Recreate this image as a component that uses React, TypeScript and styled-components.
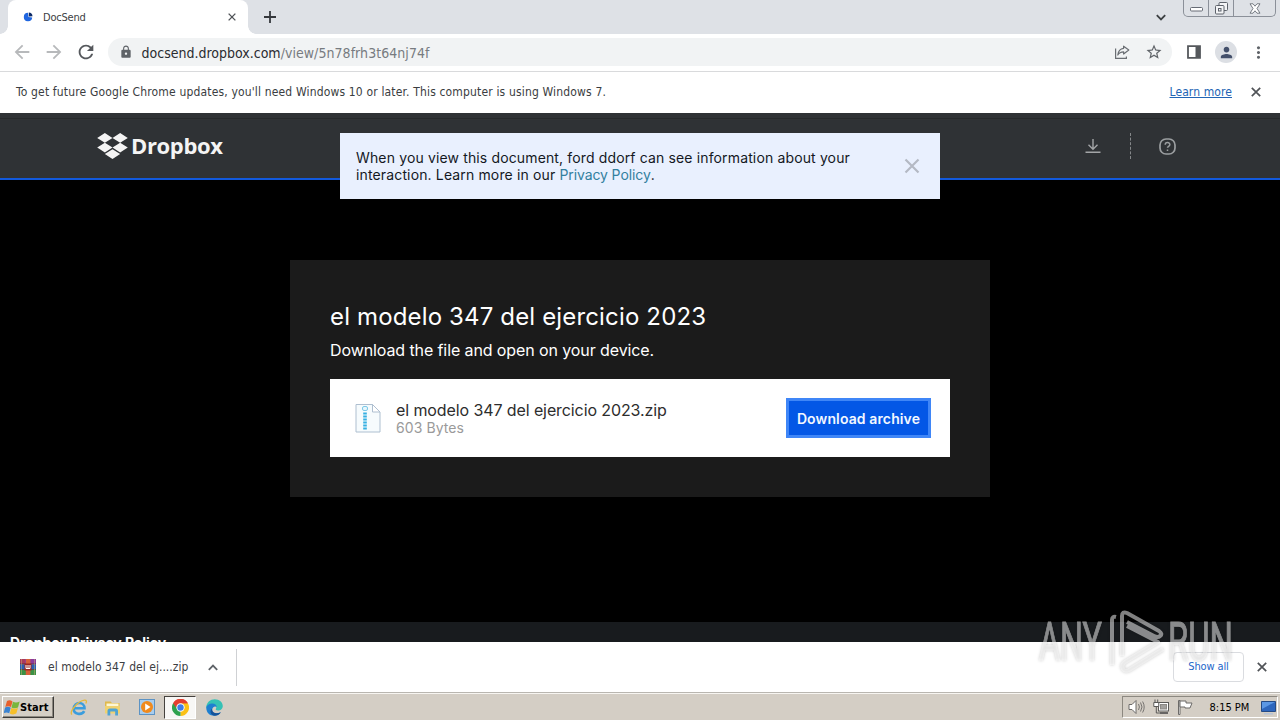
import React from "react";
import styled, { createGlobalStyle } from "styled-components";
import {
  MdArrowBack,
  MdArrowForward,
  MdLock,
  MdMoreVert,
  MdPerson,
  MdRefresh,
  MdStarBorder,
} from "react-icons/md";

const UI_FONT = `"DejaVu Sans Condensed", "DejaVu Sans", sans-serif`;
const PAGE_FONT = `Inter, "Liberation Sans", sans-serif`;

const GlobalStyle = createGlobalStyle`
  * { box-sizing: border-box; }
  body { margin: 0; background: #000; overflow: hidden; }
  svg { display: block; flex: none; }
`;

const Desktop = styled.div`
  position: relative;
  display: flex;
  flex-direction: column;
  width: 1280px;
  height: 720px;
  overflow: hidden;
  font-family: ${UI_FONT};
  white-space: nowrap;
`;

/* Browser chrome */

const TabStrip = styled.div`
  display: flex;
  height: 34px;
  padding-left: 8px;
  background: #dee1e6;
`;

const Tab = styled.div`
  position: relative;
  display: flex;
  align-items: center;
  width: 240px;
  padding: 0 9px 0 15px;
  border-radius: 8px 8px 0 0;
  background: #fff;
  color: #3c4043;

  &::before,
  &::after {
    content: "";
    position: absolute;
    bottom: 0;
    width: 8px;
    height: 8px;
  }
  &::before {
    left: -8px;
    background: radial-gradient(circle at 0 0, transparent 7.5px, #fff 8px);
  }
  &::after {
    right: -8px;
    background: radial-gradient(circle at 100% 0, transparent 7.5px, #fff 8px);
  }
`;

const TabTitle = styled.span`
  flex: 1;
  margin-left: 10px;
  font-size: 11px;
  letter-spacing: -0.2px;
`;

const NewTab = styled.div`
  display: flex;
  align-items: center;
  margin-left: 16px;
`;

const StripSpacer = styled.div`
  flex: 1;
`;

const TabSearch = styled.div`
  display: flex;
  align-items: center;
  margin-right: 17px;
`;

const WindowButtons = styled.div`
  display: flex;
  width: 93px;
  height: 17px;
  margin-right: 4px;
  border: 1px solid #8b9099;
  border-top: 0;
  border-radius: 0 0 5px 5px;
`;

const WindowButton = styled.div<{ $width: number }>`
  display: flex;
  align-items: center;
  justify-content: center;
  width: ${(p) => p.$width}px;

  & + & {
    border-left: 1px solid #8b9099;
  }
`;

const Toolbar = styled.div`
  display: flex;
  align-items: center;
  height: 38px;
  padding: 0 10px 1px 11px;
  border-bottom: 1px solid #d9dadc;
  background: #fff;
  color: #5f6368;
`;

const NavButton = styled.div<{ $disabled?: boolean }>`
  width: 32px;
  color: ${(p) => (p.$disabled ? "#b7b9bb" : "#55585c")};
`;

const Omnibox = styled.div`
  display: flex;
  align-items: center;
  width: 1064px;
  height: 28px;
  margin-left: 1px;
  padding: 0 9px 0 11px;
  border-radius: 14px;
  background: #f1f3f4;
`;

const Address = styled.div`
  flex: 1;
  margin-left: 8.5px;
  padding-top: 1px;
  color: #777b80;
  font-size: 14px;
  letter-spacing: 0.05px;
`;

const Host = styled.span`
  color: #2a2c30;
  letter-spacing: 0;
`;

const OmniboxActions = styled.div`
  display: flex;
  align-items: center;
  gap: 15px;
`;

const ToolbarActions = styled.div`
  display: flex;
  align-items: center;
  flex: 1;
  padding-left: 15px;
`;

const Avatar = styled.div`
  display: flex;
  align-items: center;
  justify-content: center;
  width: 22px;
  height: 22px;
  margin: 0 12px 0 14px;
  border-radius: 50%;
  background: #dcdfe4;
  color: #44506b;
`;

const InfoBar = styled.div`
  display: flex;
  align-items: center;
  height: 41px;
  padding: 0 19px 1px 16px;
  background: #fff;
  color: #3a3d41;
  font-size: 12px;
`;

const InfoText = styled.span`
  flex: 1;
  padding-bottom: 1px;
  letter-spacing: 0.16px;
`;

const InfoLink = styled.a`
  margin-right: 19px;
  padding-bottom: 1px;
  color: #2264b4;
  letter-spacing: 0.1px;
  text-decoration: underline;
  text-underline-offset: 1px;
`;

/* Web page */

const Viewport = styled.main`
  position: relative;
  display: flex;
  flex-direction: column;
  height: 529px;
  overflow: hidden;
  background: #000;
  font-family: ${PAGE_FONT};
`;

const SiteHeader = styled.header`
  display: flex;
  align-items: center;
  height: 67px;
  padding: 1px 104px 0 97px;
  border-bottom: 2px solid #1259dc;
  background: linear-gradient(#2f3235 5px, #26292b 5px, #26292b 6px, #2f3235 6px);
`;

const Brand = styled.div`
  display: flex;
  align-items: center;
  flex: 1;
  color: #f4f4f4;
`;

const Wordmark = styled.span`
  margin: -3px 0 0 3px;
  font: 700 22px/26px "Open Sans", sans-serif;
  letter-spacing: -0.35px;
`;

const HeaderTools = styled.div`
  display: flex;
  align-items: center;
`;

const DashedRule = styled.div`
  height: 26px;
  margin: 0 28px 0 29px;
  border-left: 1px dashed #85888a;
`;

const Notice = styled.div`
  position: absolute;
  top: 20px;
  left: 340px;
  display: flex;
  align-items: center;
  justify-content: space-between;
  width: 600px;
  height: 66px;
  padding: 0 20px 0 16px;
  background: #e9f0fe;
  color: #14181f;
  font-size: 14px;
  line-height: 17px;
`;

const NoticeLine = styled.div`
  letter-spacing: 0.14px;
`;

const NoticeLink = styled.a`
  color: #33809f;
  letter-spacing: -0.1px;
`;

const Stage = styled.section`
  flex: 1;
  padding-top: 80px;
`;

const Card = styled.article`
  width: 700px;
  height: 237px;
  margin: 0 auto;
  padding: 41px 40px 40px;
  background: #1b1b1b;
  color: #fff;
`;

const Title = styled.h1`
  margin: 0;
  font-size: 24px;
  font-weight: 400;
  line-height: 32px;
  letter-spacing: 0.15px;
`;

const Subtitle = styled.p`
  margin: 7px 0 19px;
  font-size: 16px;
  line-height: 20px;
  letter-spacing: -0.1px;
`;

const FileRow = styled.div`
  display: flex;
  align-items: center;
  height: 78px;
  padding: 0 19px 0 25px;
  background: #fff;
`;

const FileInfo = styled.div`
  flex: 1;
  margin-left: 15px;
  padding-top: 2px;
`;

const FileName = styled.div`
  color: #2d2d2d;
  font-size: 16px;
  line-height: 18px;
  letter-spacing: -0.1px;
`;

const FileSize = styled.div`
  color: #9a9a9a;
  font-size: 14px;
  line-height: 18px;
  letter-spacing: 0.08px;
`;

const DownloadButton = styled.button`
  width: 145px;
  height: 40px;
  padding: 0;
  border: 3px solid #3f86f7;
  background: #0357e6;
  color: #f2f7ff;
  font: 600 14px/17px ${PAGE_FONT};
  letter-spacing: 0.12px;
`;

const SiteFooter = styled.footer`
  height: 20px;
  padding: 11px 10px 0;
  background: #181b1e;
  color: #fff;
  font-size: 14px;
  font-weight: 700;
  line-height: 20px;
  letter-spacing: -0.08px;
`;

/* Download shelf */

const Shelf = styled.div`
  display: flex;
  align-items: center;
  height: 50px;
  padding: 0 13px 0 20px;
  background: #fff;
  color: #3c4043;
`;

const ShelfItem = styled.div`
  display: flex;
  align-items: center;
  width: 217px;
  height: 37px;
  border-right: 1px solid #cfd1d4;
`;

const ShelfName = styled.span`
  margin: 0 20px 0 12px;
  font-size: 12px;
  letter-spacing: 0.03px;
`;

const ShowAll = styled.div`
  display: flex;
  align-items: center;
  justify-content: center;
  width: 71px;
  height: 30px;
  margin: 0 13px 0 auto;
  padding-bottom: 2px;
  border: 1px solid #dadce0;
  border-radius: 4px;
  color: #1e66c9;
  font-size: 11px;
  letter-spacing: -0.12px;
`;

/* Taskbar */

const Taskbar = styled.div`
  display: flex;
  align-items: center;
  height: 28px;
  padding: 1px 2px 0 2px;
  border-top: 1px solid #b9b6b0;
  background: #d4cec5;
  box-shadow: inset 0 1px #f7f5f1;
`;

const StartButton = styled.div`
  display: flex;
  align-items: center;
  width: 52px;
  height: 22px;
  padding-left: 1px;
  border: 1px solid;
  border-color: #fff #3d3b38 #3d3b38 #fff;
  box-shadow: inset -1px -1px #8c8880;
  color: #000;
  font-size: 11px;
  font-weight: 700;
  letter-spacing: 0.1px;
`;

const QuickLaunch = styled.div`
  display: flex;
  align-items: center;
  margin-left: 9px;
`;

const Launcher = styled.div<{ $active?: boolean }>`
  display: flex;
  align-items: center;
  justify-content: center;
  width: 32px;
  height: 23px;
  margin-right: 1.8px;
  border: 1px solid;
  border-color: ${(p) => (p.$active ? "#45423e #fff #fff #45423e" : "transparent")};
  background: ${(p) => (p.$active ? "#f8f7f5" : "transparent")};
`;

const Tray = styled.div`
  display: flex;
  align-items: center;
  width: 156px;
  height: 22px;
  margin-left: auto;
  padding-left: 5px;
  border: 1px solid;
  border-color: #8c8880 #fff #fff #8c8880;
`;

const TrayIcon = styled.div`
  width: 24.5px;
`;

const Clock = styled.span`
  width: 50px;
  margin-left: 8px;
  font-size: 11px;
  color: #000;
`;

const Watermark = styled.svg`
  position: absolute;
  top: 605px;
  left: 1030px;
  filter: drop-shadow(0 0 1.5px rgba(0, 0, 0, 0.4));
  pointer-events: none;
`;

const CloseIcon = ({ size }: { size: number }) => (
  <svg width={size} height={size} viewBox="0 0 10 10" fill="none" stroke="#505357" strokeWidth="1.7">
    <path d="m.8.8 8.400 8.400M9.200.8.8 9.200" />
  </svg>
);

const PlusIcon = () => (
  <svg width="12" height="12" viewBox="0 0 12 12" fill="none" stroke="#35383c" strokeWidth="1.8">
    <path d="M6 0v12M0 6h12" />
  </svg>
);

const Chevron = ({ up, color }: { up?: boolean; color: string }) => (
  <svg width="10" height="7" viewBox="0 0 10 7" fill="none" stroke={color} strokeWidth="1.8">
    <path d={up ? "M.8 5.8 5 1.6l4.2 4.2" : "M.8 1.2 5 5.4l4.2-4.2"} />
  </svg>
);

const DocSendIcon = () => (
  <svg width="10" height="10" viewBox="0 0 10 10">
    <path d="M5 .8A4.2 4.2 0 1 0 9.2 5.4L5.500 5z" fill="#1f66e0" />
    <path d="M5.800.6A4 4 0 0 1 9.500 4.200L5.800 4.500z" fill="#0d2a66" />
  </svg>
);

const ShareIcon = () => (
  <svg width="16" height="16" viewBox="0 0 16 16" fill="none" stroke="#6a6e73" strokeWidth="1.2">
    <path d="M1.6 4.500v9.900h10.800v-2" />
    <path d="M9.600 2.200 14.800 6l-5.200 4V7.800C7 7.800 5 8.800 3.800 11 4.200 7.200 6.200 4.700 9.600 4.300z" strokeLinejoin="round" />
  </svg>
);

const SidePanelIcon = () => (
  <svg width="14" height="14" viewBox="0 0 14 14">
    <path d="M1 1.2h12v11.600H1z" fill="none" stroke="#55585c" strokeWidth="1.800" />
    <path d="M8.500 1H13v12H8.500z" fill="#55585c" />
  </svg>
);

const DropboxMark = () => (
  <svg width="31" height="26" viewBox="0 1.8 24 20.4" fill="currentColor">
    <path d="M6 1.807 0 5.629l6 3.822 6.001-3.822zM18 1.807l-6 3.822 6 3.822 6-3.822zM0 13.274l6 3.822 6.001-3.822L6 9.452zM18 9.452l-6 3.822 6 3.822 6-3.822zM6 18.371l6.001 3.822 6-3.822-6-3.822z" />
  </svg>
);

const DownloadIcon = () => (
  <svg width="16" height="16" viewBox="0 0 16 16" fill="none" stroke="#a3a5a7" strokeWidth="1.4">
    <path d="M8 1v10M3.500 6.800 8 11.200l4.500-4.400M.5 14.300h15" />
  </svg>
);

const HelpIcon = () => (
  <svg width="17" height="17" viewBox="0 0 17 17" fill="none" stroke="#9b9ea0" strokeWidth="1.700">
    <rect x="1" y="1" width="15" height="15" rx="6" />
    <path d="M6.200 6.800c0-3 4.700-2.800 4.700-.3 0 1.800-2.400 1.700-2.400 3.300M8.500 11.400v1.500" strokeWidth="1.500" />
  </svg>
);

const NoticeCross = styled.svg`
  margin: -1px -0.5px 0 0;
`;

const NoticeClose = () => (
  <NoticeCross width="18" height="18" viewBox="0 0 18 18" stroke="#b4b9c4" strokeWidth="2.2">
    <path d="m2.500 2.500 13 13m0-13-13 13" />
  </NoticeCross>
);

const ZipIcon = () => (
  <svg width="26" height="30" viewBox="0 0 26 30">
    <path d="M1 1.500h16.500L25 9v20H1z" fill="#f6fbfd" stroke="#aebfd0" strokeLinejoin="round" />
    <path d="M17.500 1.500V9H25z" fill="#fff" stroke="#aebfd0" strokeLinejoin="round" />
    <rect x="7.500" y="3.500" width="5" height="4" rx="1.500" fill="#e7f7fd" stroke="#7cc9e8" />
    <path d="M10 9.500V27" stroke="#35b0e2" strokeWidth="3.600" strokeDasharray="2 1" />
  </svg>
);

const RarIcon = () => (
  <svg width="16" height="16" viewBox="0 0 16 16">
    <path d="M0 0h16v5.300H0z" fill="#8c3a9c" />
    <path d="M0 0h5v5H0z" fill="#a93a5e" />
    <path d="M0 5.300h16v5.300H0z" fill="#2a5fb5" />
    <path d="M0 10.600h16V16H0z" fill="#3b9146" />
    <path d="M0 5h16M0 10.500h16" stroke="#4b2c2c" strokeWidth=".7" />
    <path d="M5.800 0h4.600v16H5.800z" fill="#d8603a" />
    <path d="M4.500 4.500h7v7h-7z" fill="#9c2623" />
    <path d="M6 6v3.500h4V6M8 6v3" stroke="#fff" fill="none" />
    <path d="M1.500 0v16M14.500 0v16" stroke="#cbb070" strokeWidth=".7" opacity=".7" />
  </svg>
);

const WindowsFlag = () => (
  <svg width="16" height="17" viewBox="0 0 16 16">
    <path d="M3 1.600C5 .3 6.800.8 8.500 1.900L7 7.600C5.300 6.500 3.500 6.300 1.300 7.500z" fill="#e8602c" />
    <path d="M9 2.200c1.900 1.100 4 1.100 6.700-.1L14 8c-2.400 1-4.500 1-6.500-.1z" fill="#79b63c" />
    <path d="M1.100 8.100c2.200-1.200 4-.9 5.600.1L5.200 13.800C3.400 12.600 1.700 12.600-.4 13.800z" fill="#3b83d1" />
    <path d="M7.300 8.500c2.200 1.100 4.300.9 6.600-.1l-1.600 5.700c-2.300 1.100-4.400 1-6.500-.1z" fill="#f6bf2a" />
  </svg>
);

const IeIcon = () => (
  <svg width="18" height="17" viewBox="0 0 18 17" fill="none">
    <path d="M4 9.300h10.500c0-7-10.200-7.200-10.800.2-.5 6 8.300 7 10.500 2.600" stroke="#3b9ddd" strokeWidth="2.600" />
    <path d="M2 15.500C-1.500 13 8 2 14.500 1.200c2.300-.2 2.300 1.600 1.300 3.300" stroke="#e5b93c" strokeWidth="1.300" />
  </svg>
);

const FolderIcon = () => (
  <svg width="17" height="17" viewBox="0 0 17 17">
    <path d="M1 2.500h5.500L8 4h7.500v10H1z" fill="#e0b94c" />
    <path d="M2.500 4.500h12V8h-12z" fill="#fdf6d5" />
    <path d="M1 7h15v7.500H1z" fill="#f0d270" />
    <path d="M3.500 16.500V12q0-2.500 2.500-2.500h5.500q2.500 0 2.500 2.500v4.500h-2.800v-4H6.300v4z" fill="#4fa3d4" />
  </svg>
);

const MediaIcon = () => (
  <svg width="16" height="16" viewBox="0 0 16 16">
    <rect x=".5" y=".5" width="15" height="15" fill="#a8cdee" stroke="#5c93c4" />
    <circle cx="8" cy="8" r="6" fill="#f08a1d" />
    <path d="M6.200 4.600 11.500 8l-5.300 3.400z" fill="#fff" />
  </svg>
);

const ChromeIcon = () => (
  <svg width="17" height="17" viewBox="0 0 16 16">
    <path d="M8 8 1.070 4A8 8 0 0 1 14.930 4z" fill="#e33e2f" />
    <path d="M8 8l6.930-4A8 8 0 0 1 8 16z" fill="#fbc116" />
    <path d="M8 8v8A8 8 0 0 1 1.070 4z" fill="#2fa24f" />
    <path d="M8 4h6.930l-3.400 6L8 8z" fill="#fbc116" />
    <path d="M4.500 10 1.070 4 8 4.200z" fill="#2fa24f" />
    <path d="M1.070 4A8 8 0 0 1 14.930 4H8L5 6.200 3.800 8z" fill="#e33e2f" />
    <circle cx="8" cy="8" r="3.900" fill="#fff" />
    <circle cx="8" cy="8" r="3" fill="#3f7de8" />
  </svg>
);

const EdgeIcon = () => (
  <svg width="17" height="17" viewBox="0 0 16 16">
    <path d="M.2 7.500C.8 3 4 .2 8.200.2c4.500 0 7.600 3 7.600 6.400 0 3-2.400 4.200-4.500 4.200-1.600 0-2.600-.7-2-1.600C10.500 7.300 9 5.200 6.500 5.200 3 5.200.6 7 .2 9z" fill="#35c1b5" />
    <path d="M.2 8C.6 5.800 3 4.200 5.800 4.200c2.700 0 4.500 1.700 4.300 3.600C8.500 6 5.500 8 5.800 10.600 6 13 9 14.200 13.800 12.600 10.500 17.500.5 17.200.2 8z" fill="#1e7fd0" />
    <path d="M5.800 9c-.8 4 3.500 5.500 8.300 3.400-2 3-5.200 3.800-7.600 3C3.500 14 3.800 10.500 5.800 9z" fill="#155399" />
  </svg>
);

const SpeakerIcon = () => (
  <svg width="17" height="16" viewBox="0 0 17 16" fill="none" stroke="#6c6a68">
    <path d="M1 5.500h3l4-4v13l-4-4H1z" fill="#fff" />
    <path d="M10.500 5q1.800 3 0 6M12.500 3.500q3 4.500 0 9M14.600 2.500q3.200 5.500 0 11" strokeWidth=".9" />
  </svg>
);

const NetworkIcon = () => (
  <svg width="17" height="16" viewBox="0 0 17 16" fill="none" stroke="#5b5a58">
    <rect x="5.500" y="3.500" width="10" height="8.500" fill="#fff" />
    <rect x="7.500" y="5.500" width="6" height="4.500" fill="#a3a19e" stroke="#8b8986" />
    <path d="M7 14h8" strokeWidth="1.800" />
    <path d="M.8 3.500h5v4h-5zM2 3.500v-3M4.700 3.500v-3" fill="#fff" />
    <path d="M3.300 7.500v6.500H7" />
  </svg>
);

const FlagIcon = () => (
  <svg width="17" height="16" viewBox="0 0 17 16" stroke="#6c6a68" fill="#fff">
    <path d="M1.500 15.500v-14H3v14z" />
    <path d="M3 2h6v2h6l-2 5H8V8H3z" />
  </svg>
);

const MonitorIcon = () => (
  <svg width="17" height="16" viewBox="0 0 17 16">
    <path d="M1.500 2.500h14v10h-14z" fill="#2d66bd" stroke="#244a85" />
    <path d="M2 3h13L2 10z" fill="#5b97e4" />
    <path d="M4 14h9v1.500H4z" fill="#b5c3d6" />
  </svg>
);

export default function App() {
  return (
    <Desktop>
      <GlobalStyle />
      <TabStrip>
        <Tab>
          <DocSendIcon />
          <TabTitle>DocSend</TabTitle>
          <TabClose>
            <CloseIcon size={8} />
          </TabClose>
        </Tab>
        <NewTab>
          <PlusIcon />
        </NewTab>
        <StripSpacer />
        <TabSearch>
          <Chevron color="#3c4043" />
        </TabSearch>
        <WindowButtons>
          <WindowButton $width={24}>
            <svg width="13" height="7" viewBox="0 -2 13 7">
              <rect x=".5" y=".5" width="12" height="3.500" rx="1" fill="#fff" stroke="#666b75" />
            </svg>
          </WindowButton>
          <WindowButton $width={25}>
            <svg width="13" height="13" viewBox="0 0 13 13" fill="#f3f4f6" stroke="#5d626b">
              <rect x="4" y=".5" width="8.500" height="8" rx="1" />
              <rect x=".5" y="3.500" width="8.500" height="8.500" rx="1" />
              <rect x="3.500" y="6.500" width="2.500" height="2.500" />
            </svg>
          </WindowButton>
          <WindowButton $width={42}>
            <svg width="12" height="11" viewBox="0 0 12 11">
              <path d="m1 .8 3 0L6 3.200 8 .8h3L8 5.500l3 4.700H8L6 7.800 4 10.200H1l3-4.700z" fill="#fff" stroke="#6a6f78" strokeWidth=".9" />
            </svg>
          </WindowButton>
        </WindowButtons>
      </TabStrip>

      <Toolbar>
        <NavButton $disabled>
          <MdArrowBack size={22} />
        </NavButton>
        <NavButton $disabled>
          <MdArrowForward size={22} />
        </NavButton>
        <NavButton>
          <MdRefresh size={22} />
        </NavButton>
        <Omnibox>
          <MdLock size={14} />
          <Address>
            <Host>docsend.dropbox.com</Host>/view/5n78frh3t64nj74f
          </Address>
          <OmniboxActions>
            <ShareIcon />
            <MdStarBorder size={18} />
          </OmniboxActions>
        </Omnibox>
        <ToolbarActions>
          <SidePanelIcon />
          <Avatar>
            <MdPerson size={17} />
          </Avatar>
          <MdMoreVert size={19} />
        </ToolbarActions>
      </Toolbar>

      <InfoBar>
        <InfoText>
          To get future Google Chrome updates, you'll need Windows 10 or later. This computer is using Windows 7.
        </InfoText>
        <InfoLink>Learn more</InfoLink>
        <CloseIcon size={10} />
      </InfoBar>

      <Viewport>
        <SiteHeader>
          <Brand>
            <DropboxMark />
            <Wordmark>Dropbox</Wordmark>
          </Brand>
          <HeaderTools>
            <DownloadIcon />
            <DashedRule />
            <HelpIcon />
          </HeaderTools>
        </SiteHeader>
        <Stage>
          <Card>
            <Title>el modelo 347 del ejercicio 2023</Title>
            <Subtitle>Download the file and open on your device.</Subtitle>
            <FileRow>
              <ZipIcon />
              <FileInfo>
                <FileName>el modelo 347 del ejercicio 2023.zip</FileName>
                <FileSize>603 Bytes</FileSize>
              </FileInfo>
              <DownloadButton>Download archive</DownloadButton>
            </FileRow>
          </Card>
        </Stage>
        <SiteFooter>Dropbox Privacy Policy</SiteFooter>
        <Notice>
          <div>
            <NoticeLine>When you view this document, ford ddorf can see information about your</NoticeLine>
            <NoticeLine>
              interaction. Learn more in our <NoticeLink>Privacy Policy</NoticeLink>.
            </NoticeLine>
          </div>
          <NoticeClose />
        </Notice>
      </Viewport>

      <Shelf>
        <ShelfItem>
          <RarIcon />
          <ShelfName>el modelo 347 del ej....zip</ShelfName>
          <Chevron up color="#5f6368" />
        </ShelfItem>
        <ShowAll>Show all</ShowAll>
        <CloseIcon size={10} />
      </Shelf>

      <Taskbar>
        <StartButton>
          <WindowsFlag />
          Start
        </StartButton>
        <QuickLaunch>
          <Launcher>
            <IeIcon />
          </Launcher>
          <Launcher>
            <FolderIcon />
          </Launcher>
          <Launcher>
            <MediaIcon />
          </Launcher>
          <Launcher $active>
            <ChromeIcon />
          </Launcher>
          <Launcher>
            <EdgeIcon />
          </Launcher>
        </QuickLaunch>
        <Tray>
          <TrayIcon>
            <SpeakerIcon />
          </TrayIcon>
          <TrayIcon>
            <NetworkIcon />
          </TrayIcon>
          <TrayIcon>
            <FlagIcon />
          </TrayIcon>
          <Clock>8:15 PM</Clock>
          <MonitorIcon />
        </Tray>
      </Taskbar>

      <Watermark width="210" height="80" viewBox="0 0 210 80">
        <g fill="#fff" stroke="#fff" strokeWidth="1" opacity=".5" fontFamily="Roboto, sans-serif" fontSize="53">
          <text x="9" y="55" textLength="63" lengthAdjust="spacingAndGlyphs">
            ANY
          </text>
          <text x="138" y="55" textLength="65" lengthAdjust="spacingAndGlyphs">
            RUN
          </text>
        </g>
        <path
          d="M82 60V15q0-4 4-3M92 51V11q0-5 5-3l32 18q4 3 1 5-2 2-6 0L97 17M97 21l31 16-33 20q-4 3-2 7 2 3 6 1l34-21"
          fill="none"
          stroke="#fff"
          strokeOpacity=".5"
          strokeWidth="4"
          strokeLinejoin="round"
        />
      </Watermark>
    </Desktop>
  );
}

const TabClose = styled.div`
  margin-right: 3px;
`;
